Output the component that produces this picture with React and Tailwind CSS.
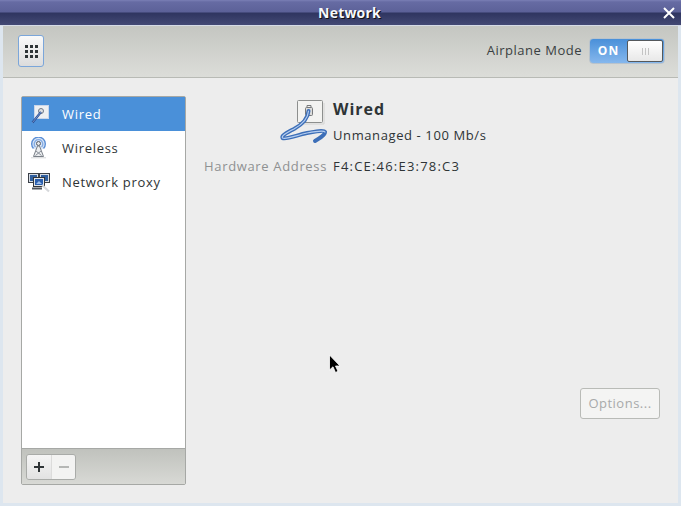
import React from "react";

function WiredSmall() {
  return (
    <svg width="24" height="22" viewBox="0 0 24 22" fill="none">
      <rect x="6.5" y="2.5" width="14" height="13" fill="#eef0f2" stroke="#c9d6ea" />
      <circle cx="13" cy="8" r="2.5" fill="#dfe2e6" stroke="#6f7985" strokeWidth="1" />
      <path d="M13 9 L4.5 19.5" stroke="#2a4d94" strokeWidth="2.2" />
      <path d="M13 9 L4.5 19.5" stroke="#8fb0e0" strokeWidth="0.7" />
    </svg>
  );
}
function WirelessIcon() {
  return (
    <svg width="24" height="22" viewBox="0 0 24 22" fill="none">
      <circle cx="10.5" cy="7" r="6.5" fill="#dbe7f7" />
      <path d="M5.5 11.5 A6.8 6.8 0 1 1 15.5 11.5" stroke="#5b8fd6" strokeWidth="1.4" />
      <path d="M7.5 10 A4.3 4.3 0 1 1 13.5 10" stroke="#86ade3" strokeWidth="1.4" />
      <circle cx="10.5" cy="6.5" r="2" fill="#e4e6e9" stroke="#565d66" />
      <path d="M9.5 9 L5.5 19.5 H15.5 L11.5 9 Z" fill="#eceef0" stroke="#7a8088" />
      <path d="M8 14 L13.5 18.5 M13 14 L7.5 18.5" stroke="#8a9099" />
      <path d="M3 20.8 H18" stroke="#d3d5d8" />
    </svg>
  );
}
function ProxyIcon() {
  return (
    <svg width="24" height="22" viewBox="0 0 24 22" fill="none">
      <rect x="0.5" y="2.5" width="10" height="9" fill="#d7dde5" stroke="#3c4148" />
      <rect x="11.5" y="2.5" width="10" height="9" fill="#d7dde5" stroke="#3c4148" />
      <rect x="2" y="4" width="7" height="6" fill="#2f5f9f" />
      <rect x="13" y="4" width="7" height="6" fill="#2f5f9f" />
      <rect x="5.5" y="6.5" width="11" height="9" fill="#e2e5e9" stroke="#30353b" />
      <rect x="7" y="8" width="8" height="6" fill="#2a5fae" />
      <path d="M8 13 L11 10 L14 13 Z" fill="#9cbce8" />
      <path d="M4 17.5 H14" stroke="#50565e" strokeWidth="2" />
      <path d="M14 14 L21 20.5" stroke="#d6d8db" strokeWidth="2.2" />
    </svg>
  );
}
function WiredLarge() {
  return (
    <svg width="52" height="49" viewBox="0 0 52 49" fill="none">
      <rect x="18.5" y="3.5" width="25" height="22" rx="1" fill="#f3f3f1" stroke="#8d8f8e" />
      <path d="M20 27 H45 V6" stroke="#d4d4d2" />
      <rect x="26.5" y="10.5" width="7" height="8" rx="1" fill="#dcdcda" stroke="#77797b" />
      <path d="M28 10 V8.5 H32 V10" stroke="#77797b" />
      <path d="M29.5 14 C29 22 24 27 15 32 C7 36 2 39 3.5 41 C7 43 18 38 28 36 C36 34.5 45 33 46 35 C46 38 41 41 36 44" stroke="#3d6fb8" strokeWidth="4" strokeLinecap="round" fill="none" />
      <path d="M29.5 14 C29 22 24 27 15 32 C7 36 2 39 3.5 41 C7 43 18 38 28 36 C36 34.5 45 33 46 35" stroke="#b6cef0" strokeWidth="1.2" strokeLinecap="round" fill="none" />
    </svg>
  );
}
function Row({ icon, label, active }) {
  return (
    <div className={`flex h-[34px] items-center ${active ? "bg-[#4a90d9] text-white" : "text-[#2e3436]"}`}>
      <div className="flex w-[40px] justify-start pl-[6px]">{icon}</div>
      <span className="pt-[1px]">{label}</span>
    </div>
  );
}

export default function App() {
  return (
    <div className="relative flex h-[506px] w-[681px] flex-col overflow-hidden bg-[#ededed] font-['Open_Sans',sans-serif] text-[13px] tracking-[0.7px] text-[#2e3436]">
      <div className="relative flex h-[26px] shrink-0 items-center justify-center border-b border-[#d5dbe6] bg-[linear-gradient(#7a7fb5_0px,#666ba3_2px,#5c6198_12px,#2f3560_13px,#434974_25px)] pl-[18px]">
        <span className="text-[14px] font-bold tracking-[0.2px] text-[#f7f8fb] [text-shadow:1px_1px_0_#111]">Network</span>
        <svg className="absolute right-[5px] top-[6px]" width="14" height="14" viewBox="0 0 14 14">
          <path d="M2 2 L12 12 M12 2 L2 12" stroke="#fff" strokeWidth="2" />
        </svg>
      </div>
      <div className="flex min-h-0 flex-1 flex-col border-x-[3px] border-b-[3px] border-x-[#dde6ef] border-b-[#dde6ef]">
        <div className="flex h-[52px] shrink-0 items-center justify-between border-b border-[#b8bab5] bg-[linear-gradient(#c4c6c1,#dcddd9)] pb-[1px] pl-[15px] pr-[13px]">
          <button className="flex h-[32px] w-[26px] items-center justify-center rounded-[3px] border border-[#7ba6da] bg-[linear-gradient(#fafafa,#dcdcdc)]">
            <span className="grid grid-cols-3 gap-[2px]">
              {Array.from({ length: 9 }).map((_, i) => (
                <span key={i} className="h-[3px] w-[3px] bg-[#2e3436]" />
              ))}
            </span>
          </button>
          <div className="flex items-center gap-[7px]">
            <span className="tracking-[0.5px] text-[#3a3f42]">Airplane Mode</span>
            <div className="flex h-[26px] w-[76px] rounded-[4px] border border-[#b9c3cc] bg-[linear-gradient(#4a90d9,#85b7ed)] py-[1px] pr-[1px]">
              <span className="flex w-[37px] items-center justify-center text-[12px] font-bold tracking-[1px] text-white">ON</span>
              <span className="flex flex-1 items-center justify-center gap-[2px] rounded-[2px] border border-[#55595c] bg-[linear-gradient(#fff,#e8e8e8)]">
                <i className="h-[7px] w-[1px] bg-[#c4c4c4]" /><i className="h-[7px] w-[1px] bg-[#c4c4c4]" /><i className="h-[7px] w-[1px] bg-[#c4c4c4]" />
              </span>
            </div>
          </div>
        </div>
        <div className="flex min-h-0 flex-1 p-[18px]">
          <div className="flex w-[165px] shrink-0 flex-col rounded-[2px] border border-[#a6a8a5]">
            <div className="flex-1 bg-white">
              <Row icon={<WiredSmall />} label="Wired" active />
              <Row icon={<WirelessIcon />} label="Wireless" />
              <Row icon={<ProxyIcon />} label="Network proxy" />
            </div>
            <div className="flex h-[36px] items-center border-t border-[#a6a8a5] bg-[linear-gradient(#c0c2bd,#d8d9d5)] px-[4px]">
              <div className="flex h-[26px] w-[50px] rounded-[3px] border border-[#a9aba8]">
                <span className="flex w-[25px] items-center justify-center rounded-l-[2px] border-r border-[#dcdcdb] bg-[linear-gradient(#f5f5f5,#e2e2e2)]">
                  <svg width="12" height="12" viewBox="0 0 12 12"><path d="M6 1 V11 M1 6 H11" stroke="#2e3436" strokeWidth="2" /></svg>
                </span>
                <span className="flex flex-1 items-center justify-center rounded-r-[2px] bg-[#f3f3f2]">
                  <svg width="12" height="12" viewBox="0 0 12 12"><path d="M1 6 H11" stroke="#b5b7b5" strokeWidth="2" /></svg>
                </span>
              </div>
            </div>
          </div>
          <div className="flex min-w-0 flex-1 flex-col">
            <div className="grid grid-cols-[141px_1fr] gap-x-[6px]">
              <div className="flex justify-end pt-[1px]">
                <div className="mr-[-4px]"><WiredLarge /></div>
              </div>
              <div className="flex flex-col pt-[1px]">
                <span className="h-[26px] text-[16px] font-bold tracking-[1px]">Wired</span>
                <span className="h-[24px] leading-[24px] tracking-[0.6px]">Unmanaged - 100 Mb/s</span>
              </div>
              <span className="mt-[9px] h-[20px] text-right leading-[20px] tracking-[0.65px] text-[#8f9192]">Hardware Address</span>
              <span className="mt-[9px] h-[20px] leading-[20px] tracking-[1.2px]">F4:CE:46:E3:78:C3</span>
            </div>
            <div className="flex flex-1 items-end justify-end pb-[66px]">
              <button className="h-[31px] w-[80px] rounded-[3px] border border-[#b9bbb7] bg-[#f4f4f3] pt-[1px] tracking-[0.5px] text-[#a8aaaa]">Options...</button>
            </div>
          </div>
        </div>
      </div>
      <svg className="absolute left-[328px] top-[354px]" width="14" height="20" viewBox="0 0 14 20">
        <path d="M1.5 1 V16 L5 12.8 L7.5 18.5 L10 17.3 L7.5 12 H12 Z" fill="#000" stroke="#fff" strokeWidth="0.8" />
      </svg>
    </div>
  );
}
